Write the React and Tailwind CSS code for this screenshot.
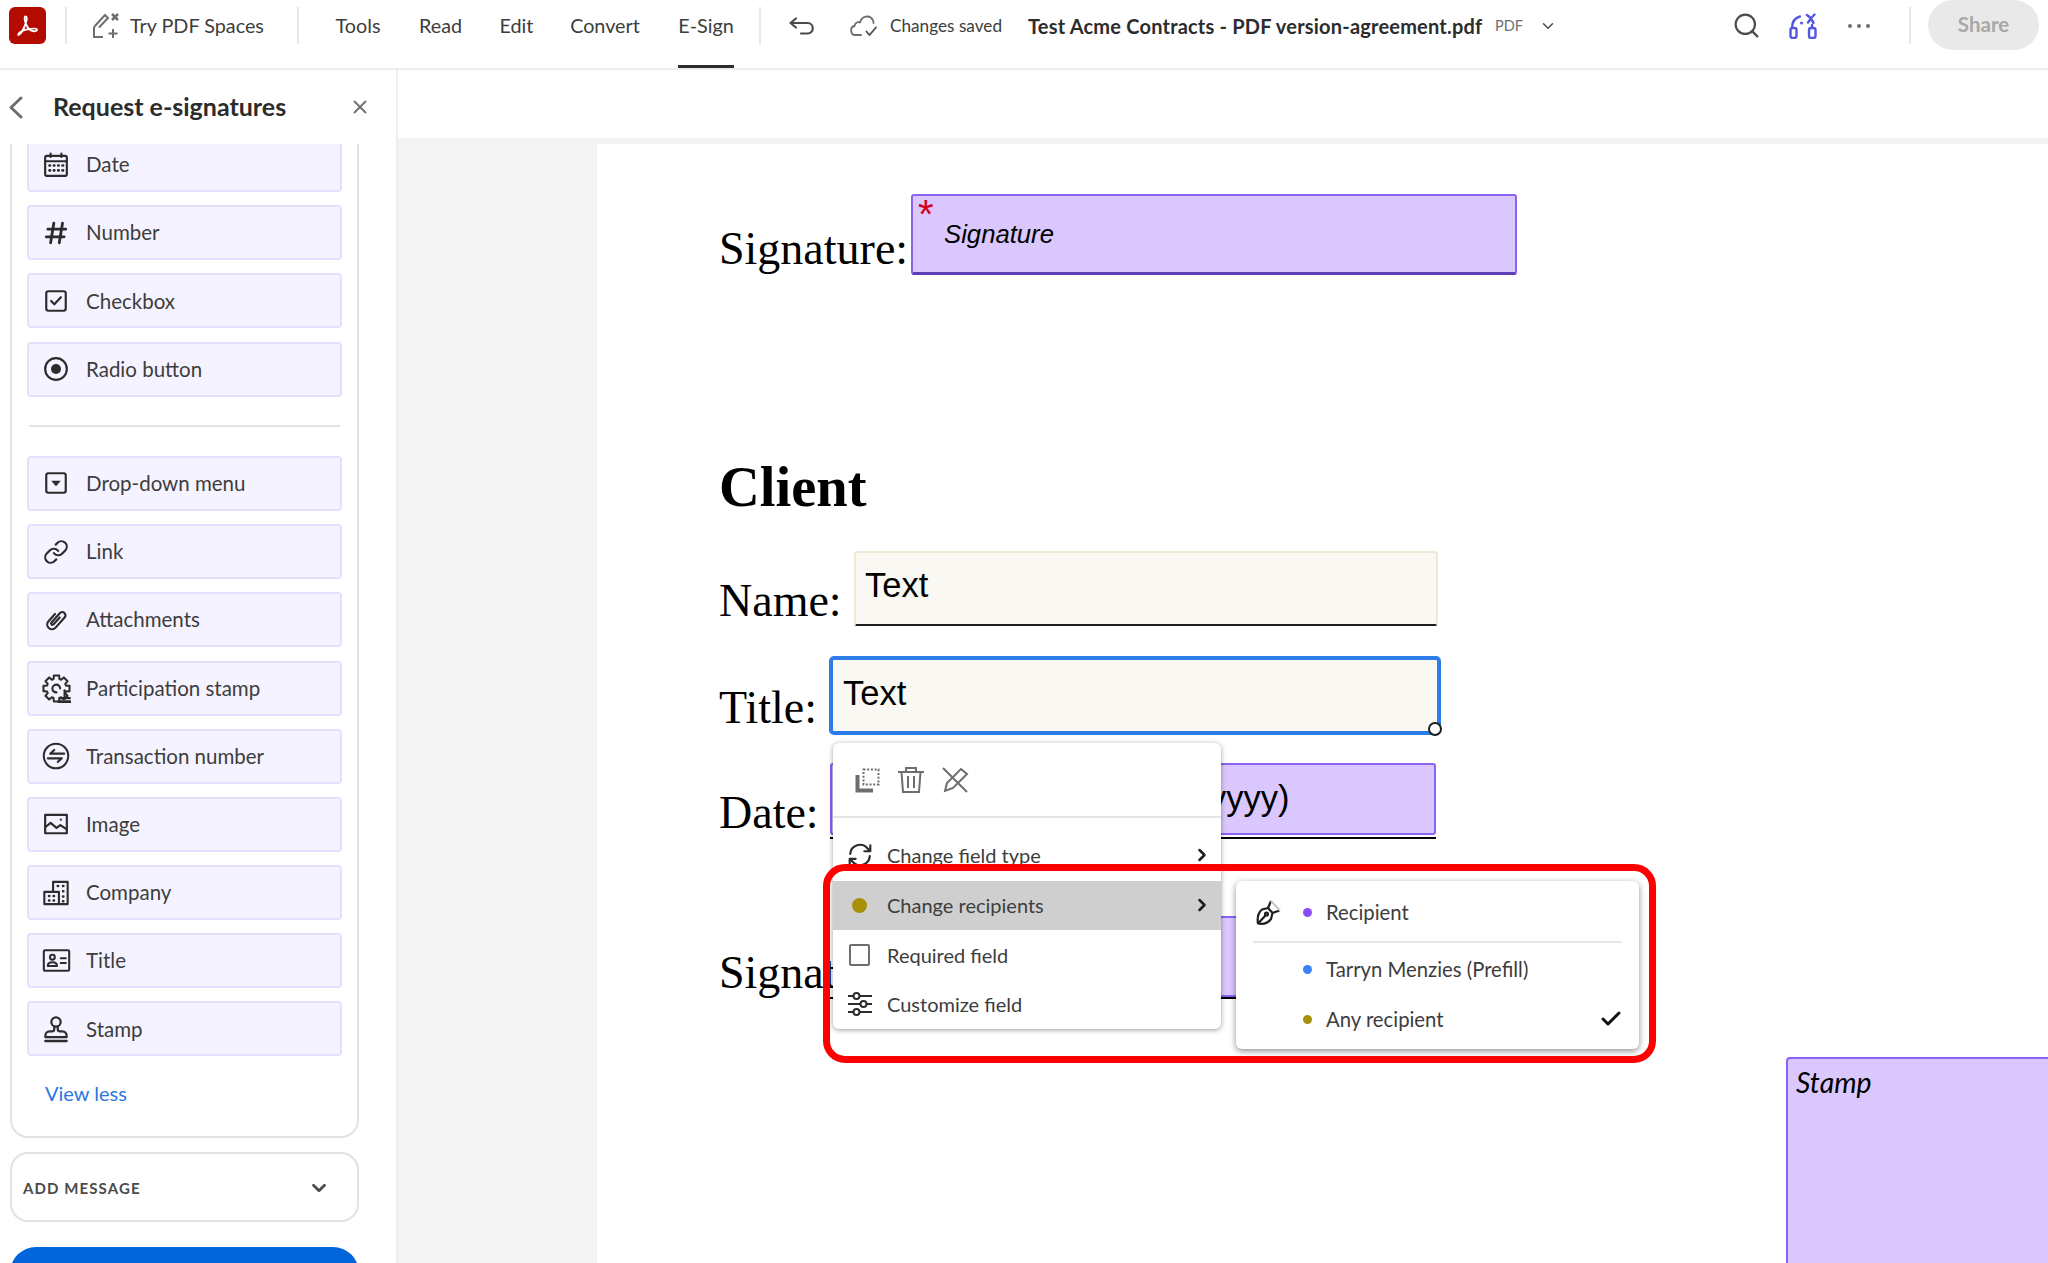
import { ChevronDown, ChevronRight, Check, X, Search } from "lucide-react";

function Ico({ children, className = "w-[26px] h-[26px]", stroke = 2 }) {
  return (
    <svg viewBox="0 0 24 24" fill="none" stroke="currentColor" strokeWidth={stroke} strokeLinecap="round" strokeLinejoin="round" className={className}>
      {children}
    </svg>
  );
}

const gearPath = (() => {
  let d = "";
  for (let i = 0; i < 8; i++) {
    const a = (i * Math.PI) / 4;
    const pts = [
      [8.2, a - 0.3],
      [11, a - 0.2],
      [11, a + 0.2],
      [8.2, a + 0.3],
    ];
    pts.forEach(([r, t], j) => {
      const x = (12 + r * Math.cos(t)).toFixed(2);
      const y = (12 + r * Math.sin(t)).toFixed(2);
      d += `${i === 0 && j === 0 ? "M" : "L"}${x} ${y} `;
    });
  }
  return d + "Z";
})();

const icons = {
  date: (
    <Ico>
      <rect x="2" y="3.5" width="20" height="18.5" rx="1.5" />
      <path d="M2 8.5h20M7 1.5v3M17 1.5v3" />
      <path d="M6 12.5h.5M10 12.5h.5M14 12.5h.5M18 12.5h.5M6 17h.5M10 17h.5M14 17h.5M18 17h.5" strokeWidth="2.4" />
    </Ico>
  ),
  number: (
    <Ico stroke={2.6}>
      <path d="M10 3 7 21M18 3l-3 18M4.5 8.5H21M3 15.5h16.5" />
    </Ico>
  ),
  checkbox: (
    <Ico>
      <rect x="3" y="3" width="18" height="18" rx="2" />
      <path d="m7.5 12 3 3 6-6.5" />
    </Ico>
  ),
  radio: (
    <Ico>
      <circle cx="12" cy="12" r="10" />
      <circle cx="12" cy="12" r="4.6" fill="currentColor" stroke="none" />
    </Ico>
  ),
  dropdown: (
    <Ico>
      <rect x="3" y="3" width="18" height="18" rx="2" />
      <path d="M7.5 10h9L12 15z" fill="currentColor" stroke="none" />
    </Ico>
  ),
  link: (
    <Ico>
      <path d="M10 13a5 5 0 0 0 7.54.54l3-3a5 5 0 0 0-7.07-7.07l-1.72 1.71" />
      <path d="M14 11a5 5 0 0 0-7.54-.54l-3 3a5 5 0 0 0 7.07 7.07l1.71-1.71" />
    </Ico>
  ),
  attach: (
    <Ico>
      <path transform="rotate(42 12 12)" d="M7.6 8.5v9a4.4 4.4 0 0 0 8.8 0V5a3 3 0 0 0-6 0v11.5a1.3 1.3 0 0 0 2.6 0V8" />
    </Ico>
  ),
  participation: (
    <Ico className="w-[29px] h-[29px]" stroke={1.7}>
      <path d={gearPath} />
      <path d="M15 12a3.2 3.2 0 1 0-3 3.2" />
      <path d="M14 23h9.5" strokeWidth="2.4" />
      <path d="M14.5 20h8.5" strokeWidth="1.8" />
      <path d="M18.7 13.5v6" strokeWidth="1.8" />
    </Ico>
  ),
  transaction: (
    <Ico className="w-[28px] h-[28px]" stroke={1.8}>
      <circle cx="12" cy="12" r="10.5" />
      <path d="M19 10H7l3.5-3.2M5 14h12l-3.5 3.2" />
    </Ico>
  ),
  image: (
    <Ico>
      <rect x="2" y="3.5" width="20" height="17" />
      <path d="m2 15 5-4 5.5 4.5 3.5-2.5 6 4" />
      <circle cx="16.5" cy="8" r="1" fill="currentColor" stroke="none" />
    </Ico>
  ),
  company: (
    <Ico className="w-[28px] h-[28px]" stroke={1.8}>
      <path d="M9.5 11V2.5h12.5v19H2v-10.5h12.5v10.5" />
      <path d="M13.5 6h.3M18 6h.3M18 10.5h.3M18 15h.3M18 19h.3M6 14.5h.3M10 14.5h.3M6 18.5h.3M10 18.5h.3" strokeWidth="2.2" />
    </Ico>
  ),
  title: (
    <Ico className="w-[29px] h-[29px]" stroke={1.7}>
      <rect x="1.5" y="3.5" width="21" height="17" rx="1" />
      <circle cx="8.6" cy="9.3" r="2" />
      <path d="M4.8 16.5c0-2 1.6-3 3.8-3s3.8 1 3.8 3zM15.5 10.2h4.2M15.5 14h4.2" />
    </Ico>
  ),
  stamp: (
    <Ico className="w-[28px] h-[28px]" stroke={1.9}>
      <circle cx="12" cy="6" r="4" />
      <path d="M10.5 10v2.5c0 1-.7 1.5-2 1.5h-2a3.6 3.6 0 0 0-3.6 3.6V19h18.2v-1.4A3.6 3.6 0 0 0 17.5 14h-2c-1.3 0-2-.5-2-1.5V10" />
      <path d="M3 22.3h18" strokeWidth="2.2" />
    </Ico>
  ),
};

const topFields = [
  { icon: icons.date, label: "Date" },
  { icon: icons.number, label: "Number" },
  { icon: icons.checkbox, label: "Checkbox" },
  { icon: icons.radio, label: "Radio button" },
];

const moreFields = [
  { icon: icons.dropdown, label: "Drop-down menu" },
  { icon: icons.link, label: "Link" },
  { icon: icons.attach, label: "Attachments" },
  { icon: icons.participation, label: "Participation stamp" },
  { icon: icons.transaction, label: "Transaction number" },
  { icon: icons.image, label: "Image" },
  { icon: icons.company, label: "Company" },
  { icon: icons.title, label: "Title" },
  { icon: icons.stamp, label: "Stamp" },
];

function FieldItem({ icon, label }) {
  return (
    <div className="flex items-center h-[55px] shrink-0 rounded-[4px] border-2 border-[#e6dffc] bg-[#f5f3ff] text-[#2c2c2c]">
      <span className="flex justify-center w-[52px] ml-[1px]">{icon}</span>
      <span className="ml-[4px] text-[20.5px] text-[#3d3d3d]">{label}</span>
    </div>
  );
}

function Sep({ className }) {
  return <div className={`mt-[7px] h-[37px] w-[2px] bg-[#e8e8e8] ${className}`} />;
}

const tabs = [
  { label: "Tools", box: "w-[46px]", gap: "ml-[36px]" },
  { label: "Read", box: "w-[43px]", gap: "ml-[38px]" },
  { label: "Edit", box: "w-[33px]", gap: "ml-[38px]" },
  { label: "Convert", box: "w-[70px]", gap: "ml-[37px]" },
  { label: "E-Sign", box: "w-[56px]", gap: "ml-[38px]", active: true },
];

function Header() {
  return (
    <header className="flex items-start h-[70px] shrink-0 border-b-2 border-[#eeeeee] font-['Lato',sans-serif] text-[#3d3d3d]">
      <div className="flex items-center justify-center ml-[9px] mt-[7px] w-[37px] h-[37px] rounded-[6px] bg-[#b30b00]">
        <svg viewBox="0 0 24 24" className="w-[27px] h-[27px]" fill="none" stroke="white" strokeWidth="1.6" strokeLinejoin="round">
          <path d="M4 20.5c2.5-1.2 5.6-7 7.2-13.2.4-1.7.1-3.5-.9-3.5-1.3 0-1 3.5.2 6.5 1.7 4.3 4.500 6.700 7 6.800 2.200.1 3.300-.7 2.900-1.600-.5-1-3.500-1-7.500-.2-4.200.8-7.600 2.400-8.700 3.900-.6.8-.4 1.300-.2 1.300z" />
        </svg>
      </div>
      <Sep className="ml-[19px]" />
      <div className="flex items-center h-[51px] ml-[25px]">
        <svg viewBox="0 0 27 28" className="w-[27px] h-[28px] text-[#6e6e6e]" fill="none" stroke="currentColor" strokeWidth="2">
          <path d="M2 15 13 3l3 3-9 9.500M2 15v10h9" />
          <path d="M9 13h.1M14 12h.1M9 20h.1" strokeWidth="2.600" />
          <path d="M20 2l6 6M26 2l-6 6" strokeWidth="2.600" />
          <path d="M21 17v9M16.500 21.500h9" />
        </svg>
        <span className="ml-[11px] w-[135px] whitespace-nowrap text-[19.8px]">Try PDF Spaces</span>
      </div>
      <Sep className="ml-[32px]" />
      <nav className="flex">
        {tabs.map((t) => (
          <div
            key={t.label}
            className={`flex items-center justify-center h-[68px] pb-[14px] border-b-[3px] whitespace-nowrap text-[19.8px] ${t.box} ${t.gap} ${t.active ? "border-[#2c2c2c]" : "border-transparent"}`}
          >
            {t.label}
          </div>
        ))}
      </nav>
      <Sep className="ml-[25px]" />
      <div className="flex items-center h-[51px] ml-[28px]">
        <svg viewBox="0 0 26 18" className="w-[26px] h-[18px] text-[#4b4b4b]" fill="none" stroke="currentColor" strokeWidth="2.200" strokeLinecap="round" strokeLinejoin="round">
          <path d="M7 1.500 1.500 6 7 10.500M2 6h16.500c7 0 7 10.500 0 10.500H12" />
        </svg>
      </div>
      <div className="flex items-center h-[51px] ml-[35px]">
        <svg viewBox="0 0 28 23" className="w-[28px] h-[23px] text-[#6e6e6e]" fill="none" stroke="currentColor" strokeWidth="1.800" strokeLinecap="round" strokeLinejoin="round">
          <path d="M11 21H5C.5 21-.500 13 4.500 12c.5-3 3-4.500 5.500-3.500C11.500 2 20 0 23 6.500c.3.700.5 1.500.5 2.500" />
          <path d="m16.500 17.500 3 3.500 6.500-7.500" stroke="#4b4b4b" />
        </svg>
        <span className="ml-[12px] w-[113px] whitespace-nowrap text-[17.2px]">Changes saved</span>
        <span className="ml-[25px] w-[455px] whitespace-nowrap text-[20px] font-bold text-[#2c2c2c] tracking-[0.2px]">
          Test Acme Contracts - PDF version-agreement.pdf
        </span>
        <span className="ml-[12px] w-[28px] text-[14.5px] text-[#6e6e6e]">PDF</span>
        <ChevronDown className="ml-[16px] w-[18px] h-[18px] text-[#4b4b4b]" strokeWidth={2} />
      </div>
      <div className="flex items-center h-[51px] ml-[175px]">
        <Search className="w-[29px] h-[29px] text-[#4b4b4b]" strokeWidth={1.8} />
        <svg viewBox="0 0 29 26" className="ml-[28px] w-[29px] h-[26px] text-[#5258e4]" fill="none" stroke="currentColor" strokeWidth="2.400" strokeLinecap="round" strokeLinejoin="round">
          <rect x="1.500" y="15" width="6" height="10" rx="2" />
          <rect x="20" y="15" width="6.500" height="10" rx="2" />
          <path d="M3 15c0-6 2.500-10 8-11.500" />
          <path d="M12.500 10h.1" strokeWidth="3" />
          <path d="M18 2c3 2 5 4 6.500 8M25.500 1.500c-3 3-4.500 5-6.500 8" />
          <path d="M23 12v3" />
        </svg>
        <div className="ml-[30px] flex gap-[5px]">
          <i className="w-[4px] h-[4px] rounded-full bg-[#6e6e6e]" />
          <i className="w-[4px] h-[4px] rounded-full bg-[#6e6e6e]" />
          <i className="w-[4px] h-[4px] rounded-full bg-[#6e6e6e]" />
        </div>
      </div>
      <Sep className="ml-[39px]" />
      <div className="flex items-center justify-center ml-[17px] pb-[2px] w-[111px] h-[50px] rounded-full bg-[#e9e9e9] text-[20.5px] font-bold text-[#a8a8a8]">
        Share
      </div>
    </header>
  );
}

function Sidebar() {
  return (
    <aside className="flex flex-col w-[398px] shrink-0 overflow-hidden border-r-2 border-[#efefef] bg-white font-['Lato',sans-serif]">
      <div className="flex items-center h-[74px] shrink-0">
        <svg viewBox="0 0 15 23" className="ml-[8px] w-[15px] h-[23px] text-[#6e6e6e]" fill="none" stroke="currentColor" strokeWidth="3" strokeLinecap="round" strokeLinejoin="round">
          <path d="M13 2 3 11.500 13 21" />
        </svg>
        <h1 className="ml-[30px] w-[287px] whitespace-nowrap text-[25px] font-bold text-[#2c2c2c]">Request e-signatures</h1>
        <X className="ml-[9px] w-[22px] h-[22px] text-[#6e6e6e]" strokeWidth={2} />
      </div>
      <div className="ml-[10px] w-[349px] h-[994px] shrink-0 overflow-hidden rounded-b-[18px] border-x-2 border-b-2 border-[#e2e2e2] px-[15px]">
        <div className="flex flex-col gap-[13.200px] -mt-[7px]">
          {topFields.map((f) => (
            <FieldItem key={f.label} {...f} />
          ))}
          <div className="h-[2px] mx-[2px] my-[15.500px] bg-[#e2e2e2]" />
          {moreFields.map((f) => (
            <FieldItem key={f.label} {...f} />
          ))}
        </div>
        <div className="ml-[18px] mt-[22px] text-[20px] text-[#2b78e0]">View less</div>
      </div>
      <div className="flex items-center justify-between ml-[10px] mt-[14px] w-[349px] h-[70px] shrink-0 rounded-[18px] border-2 border-[#e2e2e2] pl-[11px] pr-[27px] pt-[2px]">
        <span className="text-[15px] font-bold tracking-[1.1px] text-[#4b4b4b]">ADD MESSAGE</span>
        <ChevronDown className="w-[22px] h-[22px] text-[#4b4b4b]" strokeWidth={3} />
      </div>
      <div className="ml-[10px] mt-[25px] w-[349px] h-[40px] shrink-0 rounded-t-[26px] bg-[#0265dc]" />
    </aside>
  );
}

function PdfPage() {
  const label = "absolute font-['Liberation_Serif',serif] text-[46px] leading-none text-black";
  const sans = "absolute font-['Liberation_Sans',sans-serif] leading-none text-black";
  return (
    <div className="relative flex-1 overflow-hidden bg-white">
      <div className={`${label} left-[122px] top-[82px]`}>Signature:</div>
      <div className="absolute left-[314px] top-[50px] w-[606px] h-[81px] rounded-[3px] border-2 border-b-[3px] border-[#8b63f2] border-b-[#5f3fb8] bg-[#d9c7fd]" />
      <div className="absolute left-[321px] top-[50px] font-['Liberation_Sans',sans-serif] text-[40px] leading-none text-[#d4001a]">*</div>
      <div className={`${sans} left-[347px] top-[78px] text-[25.7px] italic`}>Signature</div>

      <div className="absolute left-[122px] top-[315px] font-['Liberation_Serif',serif] text-[56.5px] font-bold leading-none text-black">Client</div>

      <div className={`${label} left-[122px] top-[434px]`}>Name:</div>
      <div className="absolute left-[257px] top-[407px] w-[584px] h-[75px] rounded-[3px] border-2 border-[#efe9d8] border-b-[#1e1e1e] bg-[#f9f8f3]" />
      <div className={`${sans} left-[268px] top-[424px] text-[34.5px]`}>Text</div>

      <div className={`${label} left-[122px] top-[541px]`}>Title:</div>
      <div className="absolute left-[232px] top-[512px] w-[612px] h-[79px] rounded-[5px] border-4 border-[#2d7de8] bg-[#f9f8f3]" />
      <div className={`${sans} left-[246px] top-[532px] text-[34.5px]`}>Text</div>
      <div className="absolute left-[831px] top-[578px] w-[14px] h-[14px] rounded-full border-2 border-[#1e1e1e] bg-white" />

      <div className={`${label} left-[122px] top-[646px]`}>Date:</div>
      <div className="absolute left-[233px] top-[619px] w-[606px] h-[72px] rounded-[3px] border-2 border-[#8b63f2] bg-[#d9c7fd]" />
      <div className="absolute left-[233px] top-[693px] w-[606px] h-[2px] bg-black" />
      <div className={`${sans} left-[403px] top-[637px] text-[34.5px] whitespace-nowrap`}>Date (mm/dd/yyyy)</div>

      <div className={`${label} left-[122px] top-[806px]`}>Signature:</div>
      <div className="absolute left-[314px] top-[772px] w-[606px] h-[81px] rounded-[3px] border-2 border-[#8b63f2] bg-[#d9c7fd]" />
      <div className="absolute left-[233px] top-[853px] w-[687px] h-[2px] bg-black" />

      <div className="absolute left-[1189px] top-[913px] w-[300px] h-[260px] rounded-tl-[4px] border-2 border-[#8b63f2] bg-[#d9c7fd]">
        <span className="absolute left-[8px] top-[9px] font-['Lato',sans-serif] text-[28.4px] italic leading-none text-black">Stamp</span>
      </div>
    </div>
  );
}

function MenuRow({ icon, label, active, arrow, lift }) {
  return (
    <div className={`flex items-center h-[49.500px] pl-[8px] pr-[9px] ${active ? "bg-[#cfcfcf]" : ""} ${lift ? "pb-[2px]" : ""}`}>
      <span className="flex justify-center w-[37px]">{icon}</span>
      <span className="ml-[9px] flex-1 text-[20px] text-[#3d3d3d]">{label}</span>
      {arrow && <ChevronRight className="w-[20px] h-[20px] text-[#1e1e1e]" strokeWidth={3} />}
    </div>
  );
}

function ContextMenu() {
  return (
    <div className="absolute left-[833px] top-[743px] w-[388px] h-[286px] rounded-[6px] bg-white shadow-[0_1px_5px_rgba(0,0,0,0.4)] font-['Lato',sans-serif]">
      <div className="flex items-center h-[75px] pl-[22px] text-[#6e6e6e] border-b-2 border-[#e6e6e6]">
        <svg viewBox="0 0 26 26" className="w-[26px] h-[26px]" fill="none" stroke="currentColor">
          <path d="M2.500 8v15.500H18" strokeWidth="4" />
          <path d="M8.500 2.500h15v15h-15z" strokeWidth="2" strokeDasharray="2 1.700" />
        </svg>
        <svg viewBox="0 0 28 28" className="ml-[16px] w-[28px] h-[28px]" fill="none" stroke="currentColor" strokeWidth="2">
          <path d="M1 6h26M9 6V2h10v4M4.500 6l1.500 20h16l1.500-20M11 10v12M17 10v12" />
        </svg>
        <svg viewBox="0 0 28 28" className="ml-[16px] w-[28px] h-[28px]" fill="none" stroke="currentColor" strokeWidth="2">
          <path d="M2 2l24 24M20 3l6 5-14 14-8 3 2-8z" />
        </svg>
      </div>
      <div className="pt-[13px]">
        <MenuRow
          lift
          label="Change field type"
          arrow
          icon={
            <Ico className="w-[26px] h-[26px] text-[#2c2c2c]" stroke={2}>
              <path d="M3 11a9 9 0 0 1 16-5l2.500 2.500M21.500 3v5.500H16M21 13a9 9 0 0 1-16 5l-2.500-2.500M2.500 21v-5.500H8" />
            </Ico>
          }
        />
        <MenuRow active label="Change recipients" arrow icon={<i className="block w-[15px] h-[15px] rounded-full bg-[#a88f0a]" />} />
        <MenuRow label="Required field" icon={<i className="block w-[21px] h-[22px] rounded-[2px] border-2 border-[#6e6e6e]" />} />
        <MenuRow
          label="Customize field"
          icon={
            <svg viewBox="0 0 26 24" className="w-[26px] h-[24px] text-[#2c2c2c]" fill="none" stroke="currentColor" strokeWidth="2">
              <path d="M1 4h5M13 4h12M1 12h12M20 12h5M1 20h5M13 20h12" />
              <circle cx="9.500" cy="4" r="3" />
              <circle cx="16.500" cy="12" r="3" />
              <circle cx="9.500" cy="20" r="3" />
            </svg>
          }
        />
      </div>
    </div>
  );
}

function SubRow({ dot, label, check, icon }) {
  return (
    <div className="flex items-center h-[50px]">
      <span className="flex justify-center w-[32px] text-[#1e1e1e]">{icon}</span>
      <i className={`ml-[18px] block w-[9px] h-[9px] rounded-full ${dot}`} />
      <span className="ml-[14px] flex-1 whitespace-nowrap text-[20.3px] text-[#3d3d3d]">{label}</span>
      {check && <Check className="-mr-[1px] w-[24px] h-[24px] text-[#111111]" strokeWidth={3} />}
    </div>
  );
}

function SubMenu() {
  return (
    <div className="absolute left-[1236px] top-[881px] w-[403px] h-[168px] rounded-[6px] bg-white pl-[17px] pr-[17px] pt-[6px] shadow-[0_2px_6px_rgba(0,0,0,0.45)] font-['Lato',sans-serif]">
      <SubRow
        dot="bg-[#8b4df5]"
        label="Recipient"
        icon={
          <svg viewBox="0 0 26 26" className="w-[26px] h-[26px]" fill="none" stroke="currentColor" strokeWidth="2.200" strokeLinejoin="round">
            <path d="M2 24.500c-1-6 .5-11 4-14l6-1.500 4.500 5-1.500 6c-3 4-8 5.500-13 4.500zM2 24.500l7.500-8" />
            <path d="M12 9l3-7M16.500 14l7-2.500" />
            <path d="M15 2l9 9.500" stroke="#c8c8c8" />
            <circle cx="10.500" cy="15" r="1.500" />
          </svg>
        }
      />
      <div className="h-[2px] mt-[4px] mb-[1px] bg-[#e6e6e6]" />
      <SubRow dot="bg-[#3b82f6]" label="Tarryn Menzies (Prefill)" />
      <SubRow dot="bg-[#a88f0a]" label="Any recipient" check />
    </div>
  );
}

export default function App() {
  return (
    <div className="relative flex flex-col w-[2048px] h-[1263px] overflow-hidden bg-white">
      <Header />
      <div className="flex flex-1 min-h-0">
        <Sidebar />
        <main className="flex flex-col flex-1 min-w-0">
          <div className="h-[68px] shrink-0 bg-white" />
          <div className="h-[6px] shrink-0 bg-[#f4f4f4]" />
          <div className="flex flex-1 min-h-0">
            <div className="w-[199px] shrink-0 bg-[#f4f4f4]" />
            <PdfPage />
          </div>
        </main>
      </div>
      <ContextMenu />
      <SubMenu />
      {/* red annotation drawn over the screenshot */}
      <div className="absolute left-[823px] top-[864px] w-[833px] h-[199px] rounded-[22px] border-[7px] border-[#ff0000] pointer-events-none" />
    </div>
  );
}
